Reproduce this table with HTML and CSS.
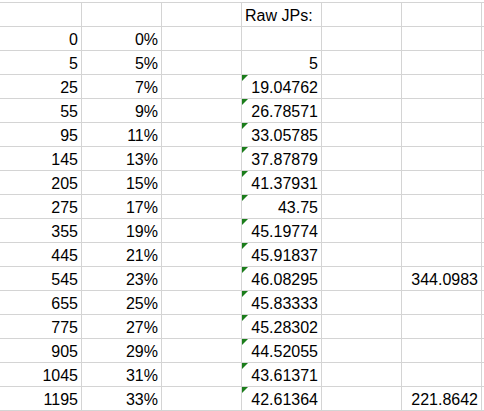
FILE: index.html
```html
<!DOCTYPE html>
<html>
<head>
<meta charset="utf-8">
<link rel="stylesheet" href="styles.css">
</head>
<body>
<div class="sheet">
  <div class="c"></div><div class="c"></div><div class="c"></div><div class="c l">Raw JPs:</div><div class="c"></div><div class="c"></div><div class="c"></div>
  <div class="c">0</div><div class="c">0%</div><div class="c"></div><div class="c"></div><div class="c"></div><div class="c"></div><div class="c"></div>
  <div class="c">5</div><div class="c">5%</div><div class="c"></div><div class="c">5</div><div class="c"></div><div class="c"></div><div class="c"></div>
  <div class="c">25</div><div class="c">7%</div><div class="c"></div><div class="c t">19.04762</div><div class="c"></div><div class="c"></div><div class="c"></div>
  <div class="c">55</div><div class="c">9%</div><div class="c"></div><div class="c t">26.78571</div><div class="c"></div><div class="c"></div><div class="c"></div>
  <div class="c">95</div><div class="c">11%</div><div class="c"></div><div class="c t">33.05785</div><div class="c"></div><div class="c"></div><div class="c"></div>
  <div class="c">145</div><div class="c">13%</div><div class="c"></div><div class="c t">37.87879</div><div class="c"></div><div class="c"></div><div class="c"></div>
  <div class="c">205</div><div class="c">15%</div><div class="c"></div><div class="c t">41.37931</div><div class="c"></div><div class="c"></div><div class="c"></div>
  <div class="c">275</div><div class="c">17%</div><div class="c"></div><div class="c t">43.75</div><div class="c"></div><div class="c"></div><div class="c"></div>
  <div class="c">355</div><div class="c">19%</div><div class="c"></div><div class="c t">45.19774</div><div class="c"></div><div class="c"></div><div class="c"></div>
  <div class="c">445</div><div class="c">21%</div><div class="c"></div><div class="c t">45.91837</div><div class="c"></div><div class="c"></div><div class="c"></div>
  <div class="c">545</div><div class="c">23%</div><div class="c"></div><div class="c t">46.08295</div><div class="c"></div><div class="c">344.0983</div><div class="c"></div>
  <div class="c">655</div><div class="c">25%</div><div class="c"></div><div class="c t">45.83333</div><div class="c"></div><div class="c"></div><div class="c"></div>
  <div class="c">775</div><div class="c">27%</div><div class="c"></div><div class="c t">45.28302</div><div class="c"></div><div class="c"></div><div class="c"></div>
  <div class="c">905</div><div class="c">29%</div><div class="c"></div><div class="c t">44.52055</div><div class="c"></div><div class="c"></div><div class="c"></div>
  <div class="c">1045</div><div class="c">31%</div><div class="c"></div><div class="c t">43.61371</div><div class="c"></div><div class="c"></div><div class="c"></div>
  <div class="c">1195</div><div class="c">33%</div><div class="c"></div><div class="c t">42.61364</div><div class="c"></div><div class="c">221.8642</div><div class="c"></div>
</div>
</body>
</html>
```
FILE: styles.css
```css
html, body {
  margin: 0;
  padding: 0;
  background: #fff;
}
body {
  font-family: "Liberation Sans", Arial, sans-serif;
  font-size: 16px;
  color: #000;
  overflow: hidden;
}
.sheet {
  margin-top: 2px;
  border-top: 1px solid #d4d4d4;
  display: grid;
  grid-template-columns: 82px 80px 80px 80px 80px 80px 1fr;
  grid-auto-rows: 24px;
}
.c {
  box-sizing: border-box;
  position: relative;
  border-right: 1px solid #d4d4d4;
  border-bottom: 1px solid #d4d4d4;
  padding: 4px 3px 0 3px;
  line-height: 18px;
  text-align: right;
  white-space: nowrap;
}
.c.l {
  text-align: left;
}
.c.t::before {
  content: "";
  position: absolute;
  left: 0;
  top: 0;
  width: 0;
  height: 0;
  border-top: 6px solid #1b7d1b;
  border-right: 6px solid transparent;
}
```
